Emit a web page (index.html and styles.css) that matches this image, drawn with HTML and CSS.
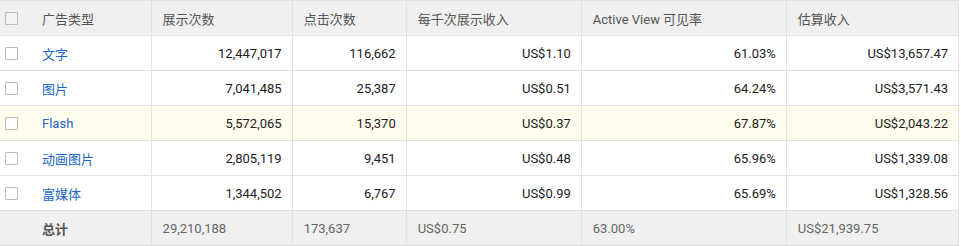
FILE: index.html
```html
<!DOCTYPE html>
<html>
<head>
<meta charset="utf-8">
<link rel="stylesheet" href="styles.css">
</head>
<body>
<table class="report">
  <colgroup>
    <col class="c-check">
    <col class="c-type">
    <col class="c-imp">
    <col class="c-clk">
    <col class="c-rpm">
    <col class="c-av">
    <col class="c-rev">
  </colgroup>
  <thead>
    <tr class="head">
      <th class="chk"><span class="box"></span></th>
      <th class="type">广告类型</th>
      <th>展示次数</th>
      <th>点击次数</th>
      <th>每千次展示收入</th>
      <th>Active View 可见率</th>
      <th>估算收入</th>
    </tr>
  </thead>
  <tbody>
    <tr>
      <td class="chk"><span class="box"></span></td>
      <td class="type"><a class="link">文字</a></td>
      <td class="num">12,447,017</td>
      <td class="num">116,662</td>
      <td class="num">US$1.10</td>
      <td class="num">61.03%</td>
      <td class="num">US$13,657.47</td>
    </tr>
    <tr>
      <td class="chk"><span class="box"></span></td>
      <td class="type"><a class="link">图片</a></td>
      <td class="num">7,041,485</td>
      <td class="num">25,387</td>
      <td class="num">US$0.51</td>
      <td class="num">64.24%</td>
      <td class="num">US$3,571.43</td>
    </tr>
    <tr class="hl">
      <td class="chk"><span class="box"></span></td>
      <td class="type"><a class="link">Flash</a></td>
      <td class="num">5,572,065</td>
      <td class="num">15,370</td>
      <td class="num">US$0.37</td>
      <td class="num">67.87%</td>
      <td class="num">US$2,043.22</td>
    </tr>
    <tr>
      <td class="chk"><span class="box"></span></td>
      <td class="type"><a class="link">动画图片</a></td>
      <td class="num">2,805,119</td>
      <td class="num">9,451</td>
      <td class="num">US$0.48</td>
      <td class="num">65.96%</td>
      <td class="num">US$1,339.08</td>
    </tr>
    <tr>
      <td class="chk"><span class="box"></span></td>
      <td class="type"><a class="link">富媒体</a></td>
      <td class="num">1,344,502</td>
      <td class="num">6,767</td>
      <td class="num">US$0.99</td>
      <td class="num">65.69%</td>
      <td class="num">US$1,328.56</td>
    </tr>
  </tbody>
  <tfoot>
    <tr class="total">
      <td class="chk"></td>
      <td class="type"><b>总计</b></td>
      <td>29,210,188</td>
      <td>173,637</td>
      <td>US$0.75</td>
      <td>63.00%</td>
      <td>US$21,939.75</td>
    </tr>
  </tfoot>
</table>
</body>
</html>
```

FILE: styles.css
```css
html, body {
  margin: 0;
  padding: 0;
  background: #ffffff;
}
body {
  font-family: Roboto, "Noto Sans CJK SC", "Liberation Sans", sans-serif;
  font-size: 13px;
  color: #222222;
}
.report {
  border-collapse: collapse;
  table-layout: fixed;
  width: 959px;
}
.c-check { width: 31px; }
.c-type { width: 120px; }
.c-imp { width: 141px; }
.c-clk { width: 114px; }
.c-rpm { width: 175px; }
.c-av { width: 205px; }
.c-rev { width: 172px; }

.report th,
.report td {
  height: 35px;
  padding: 0 10px 0 11px;
  border: 1px solid #e2e2e2;
  white-space: nowrap;
  vertical-align: middle;
  box-sizing: border-box;
}
.report th {
  background: #f0f0f0;
  color: #555555;
  font-weight: normal;
  text-align: left;
}
.report .chk {
  padding: 0 0 0 5px;
  border-right: none;
  border-left: none;
}
.report .type {
  border-left: none;
  padding-left: 11px;
}
.box {
  display: block;
  width: 11px;
  height: 11px;
  border: 1px solid #bdbdbd;
  border-radius: 1px;
  background: #ffffff;
}
.head .box {
  background: #f3f3f3;
}
.link {
  color: #2066cc;
  text-decoration: none;
}
.num {
  text-align: right;
}
.hl td {
  background: #fffdeb;
}
.total td {
  background: #f0f0f0;
  color: #666666;
  text-align: left;
  border-bottom: 1px solid #dcdcdc;
}
.total b {
  color: #555555;
  font-weight: bold;
}
```
